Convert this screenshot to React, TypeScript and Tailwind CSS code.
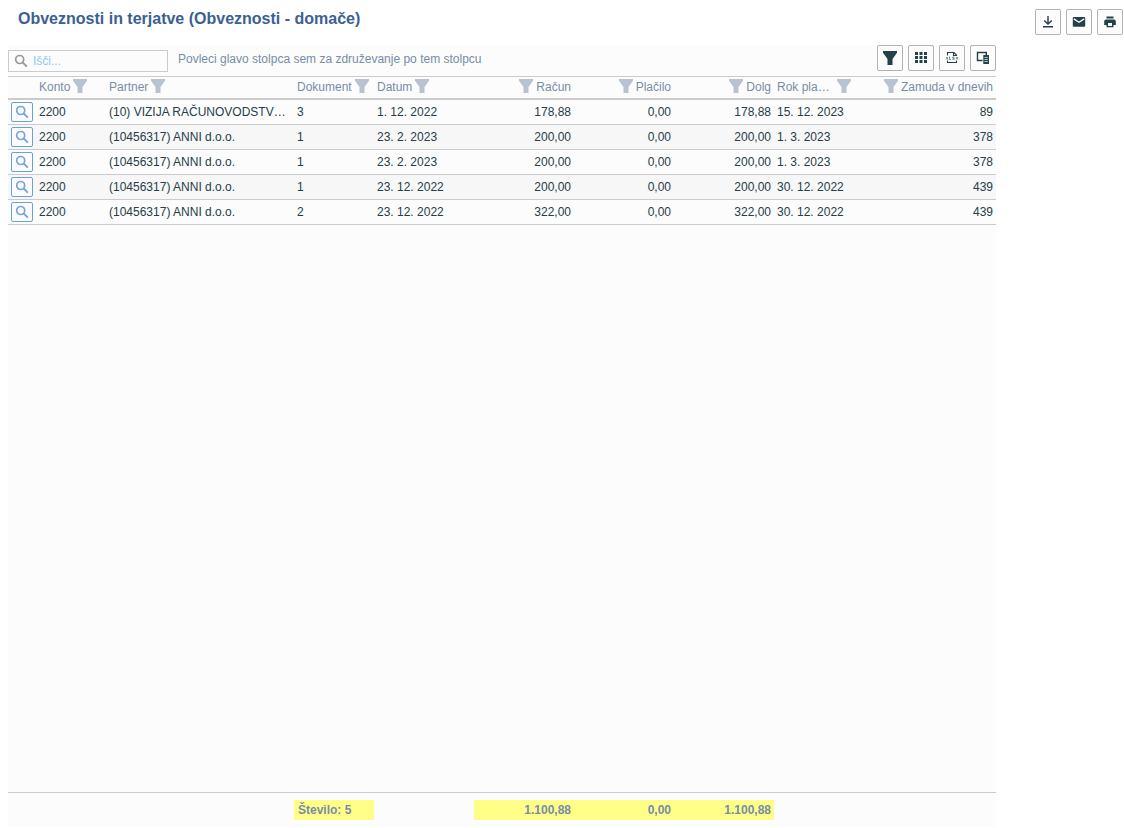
import React from "react";

type Align = "left" | "right";

interface Column {
  key: keyof Row;
  title: string;
  align: Align;
  spread?: boolean;
}

interface Row {
  konto: string;
  partner: string;
  dokument: string;
  datum: string;
  racun: string;
  placilo: string;
  dolg: string;
  rok: string;
  zamuda: string;
}

const columns: Column[] = [
  { key: "konto", title: "Konto", align: "left" },
  { key: "partner", title: "Partner", align: "left" },
  { key: "dokument", title: "Dokument", align: "left" },
  { key: "datum", title: "Datum", align: "left" },
  { key: "racun", title: "Račun", align: "right" },
  { key: "placilo", title: "Plačilo", align: "right" },
  { key: "dolg", title: "Dolg", align: "right" },
  { key: "rok", title: "Rok pla…", align: "left", spread: true },
  { key: "zamuda", title: "Zamuda v dnevih", align: "right" },
];

const anni = "(10456317) ANNI d.o.o.";

const rows: Row[] = [
  { konto: "2200", partner: "(10) VIZIJA RAČUNOVODSTV…", dokument: "3", datum: "1. 12. 2022", racun: "178,88", placilo: "0,00", dolg: "178,88", rok: "15. 12. 2023", zamuda: "89" },
  { konto: "2200", partner: anni, dokument: "1", datum: "23. 2. 2023", racun: "200,00", placilo: "0,00", dolg: "200,00", rok: "1. 3. 2023", zamuda: "378" },
  { konto: "2200", partner: anni, dokument: "1", datum: "23. 2. 2023", racun: "200,00", placilo: "0,00", dolg: "200,00", rok: "1. 3. 2023", zamuda: "378" },
  { konto: "2200", partner: anni, dokument: "1", datum: "23. 12. 2022", racun: "200,00", placilo: "0,00", dolg: "200,00", rok: "30. 12. 2022", zamuda: "439" },
  { konto: "2200", partner: anni, dokument: "2", datum: "23. 12. 2022", racun: "322,00", placilo: "0,00", dolg: "322,00", rok: "30. 12. 2022", zamuda: "439" },
];

function Columns() {
  return (
    <colgroup>
      <col className="w-[28px]" />
      <col className="w-[70px]" />
      <col />
      <col className="w-[80px]" />
      <col className="w-[100px]" />
      <col className="w-[100px]" />
      <col className="w-[100px]" />
      <col className="w-[100px]" />
      <col className="w-[80px]" />
      <col className="w-[142px]" />
    </colgroup>
  );
}

function Funnel() {
  return (
    <svg className="size-3.5 shrink-0" viewBox="0 0 14 14" fill="currentColor" aria-hidden="true">
      <path d="M0 0h14v1.800L9.500 8V14h-5V8L0 1.800z" />
    </svg>
  );
}

function Magnifier() {
  return (
    <svg className="size-3.5 shrink-0" viewBox="0 0 14 14" fill="none" stroke="currentColor" strokeWidth="1.7" aria-hidden="true">
      <circle cx="5.7" cy="5.5" r="4" />
      <path d="M8.600 8.400l4.200 4.200" strokeWidth="2" />
    </svg>
  );
}

function DownloadIcon() {
  return (
    <svg className="size-3.5" viewBox="0 0 14 14" fill="none" stroke="currentColor" strokeWidth="1.4" aria-hidden="true">
      <path d="M7 1v8M3.200 5.400L7 9l3.800-3.600M2 11.700h10" />
    </svg>
  );
}

function MailIcon() {
  return (
    <svg className="size-3.5" viewBox="0 0 14 14" aria-hidden="true">
      <rect x="0.800" y="2" width="12.400" height="9.800" rx="1" fill="currentColor" />
      <path d="M1.800 3.900L7 7.300l5.200-3.400" fill="none" stroke="#fcfcfc" strokeWidth="1.3" />
    </svg>
  );
}

function PrintIcon() {
  return (
    <svg className="size-3.5" viewBox="0 0 14 14" fill="currentColor" aria-hidden="true">
      <path d="M3.500 1.500h7v2h-7z" />
      <path fillRule="evenodd" d="M3 4.500h8a1.800 1.800 0 0 1 1.800 1.800V10h-2.300v2.300h-7V10H1.200V6.300A1.800 1.800 0 0 1 3 4.500zm2 3.500v3h4V8z" />
    </svg>
  );
}

function GridIcon() {
  return (
    <svg className="size-3.5" viewBox="0 0 14 14" fill="currentColor" aria-hidden="true">
      <path d="M1 1h3v3H1zM5.500 1h3v3h-3zM10 1h3v3h-3zM1 5h3v3H1zM5.500 5h3v3h-3zM10 5h3v3h-3zM1 9h3v3H1zM5.500 9h3v3h-3zM10 9h3v3h-3z" />
    </svg>
  );
}

function XlsxIcon() {
  return (
    <svg className="size-3.5" viewBox="0 0 14 14" fill="none" stroke="currentColor" aria-hidden="true">
      <path d="M2.500 4.500v-3h6.500l2.500 2.500v0.500M8.500 1.500v3h3.500M2.500 9.500v2h9v-2" strokeWidth="1.100" />
      <path d="M1 6l2 2.500M3 6L1 8.500M4.500 5.500v3h1.500M9.300 6H7.700v1.100h1.500v1.200H7.500M11 6l2 2.500M13 6l-2 2.500" strokeWidth="0.600" />
    </svg>
  );
}

function ColumnChooserIcon() {
  return (
    <svg className="size-3.5" viewBox="0 0 14 14" fill="none" stroke="currentColor" aria-hidden="true">
      <path d="M6.500 9.500h-5v-8h8.800V4" strokeWidth="1.400" />
      <rect x="7.300" y="4" width="5.700" height="9" fill="currentColor" stroke="none" />
      <path d="M8.500 6.500h3.300M8.500 8.500h3.300M8.500 10.500h3.300" stroke="#fcfcfc" strokeWidth="0.700" />
    </svg>
  );
}

function ToolButton({ label, children }: { label: string; children: React.ReactNode }) {
  return (
    <button
      type="button"
      aria-label={label}
      className="flex size-[26px] shrink-0 items-center justify-center rounded-xs border border-[#b3b3b3] bg-[#fcfcfc] text-[#24404a] hover:bg-gray-100"
    >
      {children}
    </button>
  );
}

export default function App() {
  return (
    <div className="flex min-h-screen flex-col bg-white pb-px font-['Liberation_Sans',Arial,sans-serif] text-xs text-[#263d48]">
      <header className="flex h-[45px] shrink-0 items-start justify-between pt-[9px] pr-px pl-[18px]">
        <h1 className="text-base leading-5 font-bold text-[#3b6193]">Obveznosti in terjatve (Obveznosti - domače)</h1>
        <div className="flex gap-[5px]">
          <ToolButton label="Prenesi"><DownloadIcon /></ToolButton>
          <ToolButton label="Pošlji po e-pošti"><MailIcon /></ToolButton>
          <ToolButton label="Natisni"><PrintIcon /></ToolButton>
        </div>
      </header>

      <main className="mr-32 ml-2 flex grow flex-col bg-[#fcfcfc]">
        <div className="flex h-[31px] items-start">
          <label className="mt-[5px] flex h-[22px] w-40 items-center gap-[5px] border border-[#cbcbcb] px-[5px] text-[#999]">
            <Magnifier />
            <input
              type="search"
              aria-label="Išči"
              placeholder="Išči..."
              className="w-full min-w-0 bg-transparent text-[#263d48] outline-none placeholder:text-[#90c8ee]"
            />
          </label>
          <p className="ml-2.5 grow pt-1.5 text-[#768da8]">Povleci glavo stolpca sem za združevanje po tem stolpcu</p>
          <div className="flex gap-[5px]">
            <ToolButton label="Filter"><Funnel /></ToolButton>
            <ToolButton label="Mreža"><GridIcon /></ToolButton>
            <ToolButton label="Izvozi v Excel"><XlsxIcon /></ToolButton>
            <ToolButton label="Izbira stolpcev"><ColumnChooserIcon /></ToolButton>
          </div>
        </div>

        <div className="grow border-t border-[#cbcbcb]">
          <table className="w-full table-fixed border-separate border-spacing-0">
            <Columns />
            <thead>
              <tr>
                <td className="h-[23px] border-b-2 border-[#cbcbcb] p-0" />
                {columns.map((c) => (
                  <th key={c.key} scope="col" className="h-[23px] border-b-2 border-[#cbcbcb] px-[3px] pt-0 pb-px font-normal text-[#768da8]">
                    <div className={c.align === "right" ? "flex h-5 flex-row-reverse items-center gap-[3px]" : "flex h-5 items-center gap-[3px]"}>
                      <span className={c.spread ? "grow text-left whitespace-nowrap" : "whitespace-nowrap"}>{c.title}</span>
                      <button type="button" aria-label={`Filter: ${c.title}`} className="flex h-4 items-start text-[#b7c3d0]">
                        <Funnel />
                      </button>
                    </div>
                  </th>
                ))}
              </tr>
            </thead>
            <tbody>
              {rows.map((row, i) => (
                <tr key={i} className="even:bg-[#f7f7f7]">
                  <td className="h-[25px] border-b border-[#cbcbcb] py-0 pr-0 pl-[3px]">
                    <button
                      type="button"
                      aria-label={`Odpri dokument ${i + 1}`}
                      className="flex h-5 w-[22px] items-center justify-center rounded-xs border border-[#6a9fe0] bg-[#fcfcfc] text-[#78a3e0]"
                    >
                      <Magnifier />
                    </button>
                  </td>
                  {columns.map((c) => (
                    <td
                      key={c.key}
                      className={
                        c.align === "right"
                          ? "h-[25px] truncate border-b border-[#cbcbcb] px-[3px] py-0 text-right"
                          : "h-[25px] truncate border-b border-[#cbcbcb] px-[3px] py-0"
                      }
                    >
                      {row[c.key]}
                    </td>
                  ))}
                </tr>
              ))}
            </tbody>
          </table>
        </div>

        <div className="border-t border-[#cbcbcb] pt-[7px] pb-[7px]">
          <table className="w-full table-fixed border-separate border-spacing-0 font-bold text-[#768da8]">
            <Columns />
            <tbody>
              <tr>
                <td colSpan={3} className="h-5 p-0" />
                <td className="bg-[#ffff88] px-1 py-0 whitespace-nowrap">Število: 5</td>
                <td className="p-0" />
                <td className="bg-[#ffff88] px-[3px] py-0 text-right">1.100,88</td>
                <td className="bg-[#ffff88] px-[3px] py-0 text-right">0,00</td>
                <td className="bg-[#ffff88] px-[3px] py-0 text-right">1.100,88</td>
                <td colSpan={2} className="p-0" />
              </tr>
            </tbody>
          </table>
        </div>
      </main>
    </div>
  );
}
